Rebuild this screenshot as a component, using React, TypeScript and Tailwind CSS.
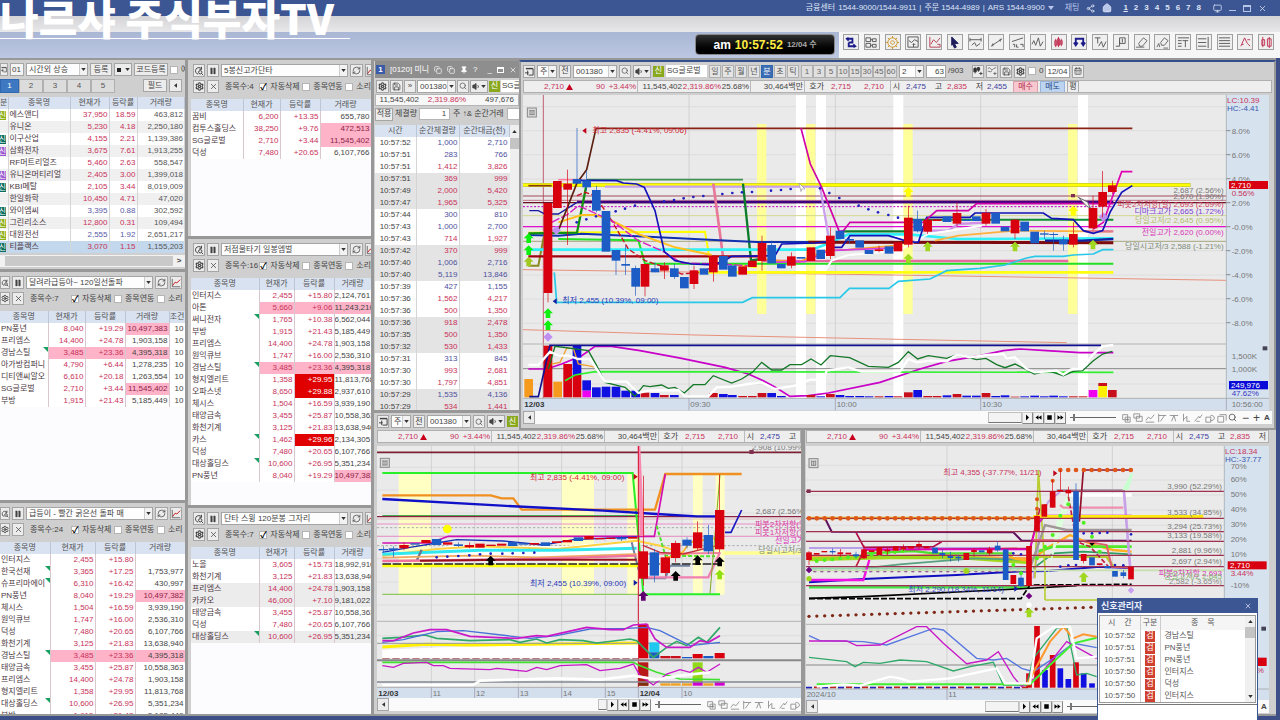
import type { ReactNode } from "react";
import {
  CalendarDays,
  Copy,
  House,
  Monitor,
  Pause,
  Pin,
  RefreshCw,
  Save,
  Search,
  Settings,
  Share2,
  Volume1,
  X,
} from "lucide-react";

const RED = "#d8000f";
const BLUE = "#1c5cc4";

/* ---------- small shared controls ---------- */

function Tri({ className = "" }: { className?: string }) {
  return (
    <svg viewBox="0 0 6 4" className={`h-[3px] w-[5px] ${className}`}>
      <path d="M0 0h6L3 4z" fill="#333" />
    </svg>
  );
}

function Btn({ children, label, className = "w-[12px]" }: { children: ReactNode; label?: string; className?: string }) {
  return (
    <button
      type="button"
      aria-label={label}
      className={`flex h-[13px] shrink-0 items-center justify-center overflow-hidden border border-[#a5a5a5] bg-[#ececec] whitespace-nowrap text-[#444] ${className}`}
    >
      {children}
    </button>
  );
}

function Combo({ value, label, className }: { value: string; label: string; className: string }) {
  return (
    <div className={`relative h-[13px] shrink-0 ${className}`}>
      <select
        aria-label={label}
        className="h-full w-full appearance-none overflow-hidden border border-[#a5a5a5] bg-[#fdfdfd] pr-[8px] pl-[2px] text-[#444]"
      >
        <option>{value}</option>
      </select>
      <span className="pointer-events-none absolute inset-y-px right-px flex w-[8px] items-center justify-center border-l border-[#ccc] bg-[#f2f2f2]">
        <Tri />
      </span>
    </div>
  );
}

function Check({ label, checked = false, className = "" }: { label: string; checked?: boolean; className?: string }) {
  return (
    <label className={`flex shrink-0 items-center gap-[3px] whitespace-nowrap ${className}`}>
      <input
        type="checkbox"
        defaultChecked={checked}
        className="size-[8px] appearance-none border border-[#b5b5b5] bg-white text-[9px] leading-[6px] font-bold text-black checked:after:content-['✓']"
      />
      {label}
    </label>
  );
}

const ScanIcon = () => (
  <svg viewBox="0 0 12 12" className="size-[10px]" fill="none" stroke="#444" strokeWidth="1.2">
    <path d="M9 3.5A4 4 0 1 0 5 9.8" />
    <circle cx="7.5" cy="7.5" r="2" />
    <path d="m9 9 2 2M9 1v3H6.500" />
  </svg>
);

const GridIcon = () => (
  <svg viewBox="0 0 10 10" className="size-[9px]" fill="none" stroke="#333" strokeWidth="1">
    <path d="M1 2h8v7H4M1 1.500h8M3 4v5M0 6.500h4" />
  </svg>
);

const MiniChart = () => (
  <svg viewBox="0 0 12 12" className="size-[10px]" fill="none">
    <path d="M1.500 1v9.500H11" stroke="#555" />
    <path d="m2 9 3-4 2 1 4-4" stroke="#c22" strokeWidth="1.200" />
  </svg>
);

const BarsPlus = () => (
  <svg viewBox="0 0 12 12" className="size-[10px]" fill="none" stroke="#333">
    <path d="M2.500 1v8M6.500 1v6" />
    <path d="M1 3h3v4H1zM5 2h3v3H5z" fill="#333" />
    <path d="M9.500 7v4M7.500 9h4" />
  </svg>
);

const WavePlus = () => (
  <svg viewBox="0 0 12 12" className="size-[10px]" fill="none" stroke="#666">
    <path d="M1 3l2-1 3 3 2-2 3-1M1 6l3 1 2-1M9.500 7v4M7.500 9h4" />
  </svg>
);

/* ---------- condition search panels ---------- */

// flags: t = new-entry mark, p = pink row, r = limit-up, v = pink volume, g = grey row
type ScanRow = [string, string, string, string, string?];

function Th({ children }: { children?: ReactNode }) {
  return (
    <th className="h-[12px] overflow-hidden border-r border-[#bcc6d4] bg-[#d9e2f0] p-0 text-center font-normal whitespace-nowrap text-[#555]">
      {children}
    </th>
  );
}

function ScanPanel({
  title,
  count,
  rows,
  cols,
  flush = false,
  extra = false,
  className,
}: {
  title: string;
  count: number;
  rows: ScanRow[];
  cols: number[];
  flush?: boolean;
  extra?: boolean;
  className: string;
}) {
  return (
    <section className={`flex flex-col overflow-hidden bg-[#cfcfcf] pt-[4px] ${className}`}>
      <div className={`flex shrink-0 gap-[2px] ${flush ? "" : "pl-[5px]"}`}>
        <Btn label="검색" className={flush ? "w-[10px]" : "w-[12px]"}><ScanIcon /></Btn>
        <Btn label="일시정지"><Pause size={8} fill="#444" strokeWidth={1} /></Btn>
        <Combo label="조건식" value={title} className="w-[127px]" />
        <Btn label="새로고침" className="w-[13px]"><RefreshCw size={9} /></Btn>
        <Btn label="차트"><MiniChart /></Btn>
      </div>
      <div className={`mt-[3px] flex h-[13px] shrink-0 items-center text-[#444] ${flush ? "" : "pl-[5px]"}`}>
        <Btn label="설정" className={flush ? "w-[10px]" : "w-[12px]"}><Settings size={9} strokeWidth={3} /></Btn>
        <Btn label="닫기" className="ml-[2px] w-[12px]"><X size={9} /></Btn>
        <span className="ml-[6px] w-[41px] whitespace-nowrap">종목수:{count}</span>
        <Check label="자동삭제" checked className="w-[43px]" />
        <Check label="종목연동" className="w-[43px]" />
        <Check label="소리" />
      </div>
      <div className={`mt-[6px] min-h-0 flex-1 overflow-hidden ${flush ? "" : "ml-[3px]"} bg-[#fcfcff]`}>
        <table className="w-full table-fixed border-collapse">
          <colgroup>
            {cols.map((w, i) => (
              <col key={i} style={{ width: w }} />
            ))}
          </colgroup>
          <thead>
            <tr>
              <Th>종목명</Th>
              <Th>현재가</Th>
              <Th>등락률</Th>
              <Th>거래량</Th>
              {extra && <Th>조건</Th>}
            </tr>
          </thead>
          <tbody>
            {rows.map(([name, price, rate, vol, f = ""], i) => {
              const pink = f.includes("p") ? "bg-[#ffb3c8]" : f.includes("g") ? "bg-[#ececec]" : "bg-white";
              const cell = "h-[12px] overflow-hidden border-r border-[#d8c8ce] p-0 pr-px text-right whitespace-nowrap";
              return (
                <tr key={i} className={f.includes("g") ? "bg-[#ececec]" : "bg-white"}>
                  <td className="relative h-[12px] overflow-hidden border-r border-[#d8c8ce] p-0 pl-px whitespace-nowrap text-[#4c3a44]">
                    {name}
                    {f.includes("t") && (
                      <span className="absolute top-0 right-0 border-t-[5px] border-l-[5px] border-t-[#18a060] border-l-transparent" />
                    )}
                  </td>
                  <td className={`${cell} ${pink} text-[#c8325a]`}>{price}</td>
                  <td className={`${cell} ${f.includes("r") ? "bg-[#e00000] text-white" : `${pink} text-[#c8325a]`}`}>{rate}</td>
                  <td className={`${cell} ${f.includes("v") ? "bg-[#ffb3c8] text-[#8c1f48]" : `${pink} text-[#444]`}`}>{vol}</td>
                  {extra && <td className={`${cell} text-[#444]`}>10</td>}
                </tr>
              );
            })}
          </tbody>
        </table>
      </div>
    </section>
  );
}

const surge: ScanRow[] = [
  ["PN풍년", "8,040", "+19.29", "10,497,383", "v"],
  ["프리엠스", "14,400", "+24.78", "1,903,158"],
  ["경남스틸", "3,485", "+23.36", "4,395,318", "tp"],
  ["아가방컴퍼니", "4,790", "+6.44", "1,278,235"],
  ["디티앤씨알오", "6,610", "+20.18", "1,263,554"],
  ["SG글로벌", "2,710", "+3.44", "11,545,402", "v"],
  ["부방", "1,915", "+21.43", "5,185,449"],
];

const redLine: ScanRow[] = [
  ["인터지스", "2,455", "+15.80", ""],
  ["한국선재", "3,365", "+17.25", "1,753,977", "t"],
  ["슈프리마에이", "6,310", "+16.42", "430,997", "t"],
  ["PN풍년", "8,040", "+19.29", "10,497,382", "v"],
  ["체시스", "1,504", "+16.59", "3,939,190"],
  ["원익큐브", "1,747", "+16.00", "2,536,310"],
  ["덕성", "7,480", "+20.65", "6,107,766"],
  ["화천기계", "3,125", "+21.83", "13,638,940"],
  ["경남스틸", "3,485", "+23.36", "4,395,318", "tp"],
  ["태양금속", "3,455", "+25.87", "10,558,363"],
  ["프리엠스", "14,400", "+24.78", "1,903,158"],
  ["형지엘리트", "1,358", "+29.95", "11,813,768"],
  ["대상홀딩스", "10,600", "+26.95", "5,351,234", "t"],
  ["부방", "1,915", "+21.43", "5,185,449"],
];

const fiveHigh: ScanRow[] = [
  ["꿈비", "6,200", "+13.35", "655,780"],
  ["컴투스홀딩스", "38,250", "+9.76", "472,513", "v"],
  ["SG글로벌", "2,710", "+3.44", "11,545,402", "v"],
  ["덕성", "7,480", "+20.65", "6,107,766"],
];

const lowPoint: ScanRow[] = [
  ["인터지스", "2,455", "+15.80", "2,124,761"],
  ["아톤", "5,660", "+9.06", "11,243,210", "p"],
  ["써니전자", "1,765", "+10.38", "6,562,044", "t"],
  ["부방", "1,915", "+21.43", "5,185,449"],
  ["프리엠스", "14,400", "+24.78", "1,903,158"],
  ["원익큐브", "1,747", "+16.00", "2,536,310"],
  ["경남스틸", "3,485", "+23.36", "4,395,318", "tp"],
  ["형지엘리트", "1,358", "+29.95", "11,813,768", "r"],
  ["오파스넷", "8,650", "+29.88", "2,937,610", "r"],
  ["체시스", "1,504", "+16.59", "3,939,190"],
  ["태양금속", "3,455", "+25.87", "10,558,363"],
  ["화천기계", "3,125", "+21.83", "13,638,940"],
  ["카스", "1,462", "+29.96", "2,134,305", "tr"],
  ["덕성", "7,480", "+20.65", "6,107,766"],
  ["대상홀딩스", "10,600", "+26.95", "5,351,234", "t"],
  ["PN풍년", "8,040", "+19.29", "10,497,383", "v"],
];

const swing: ScanRow[] = [
  ["노을", "3,605", "+15.73", "18,992,910"],
  ["화천기계", "3,125", "+21.83", "13,638,940"],
  ["프리엠스", "14,400", "+24.78", "1,903,158", "g"],
  ["카카오", "46,000", "+7.10", "9,181,022", "g"],
  ["태양금속", "3,455", "+25.87", "10,558,363"],
  ["덕성", "7,480", "+20.65", "6,107,766"],
  ["대상홀딩스", "10,600", "+26.95", "5,351,234", "tg"],
];

/* ---------- after-hours watch list ---------- */

const watch: [string, string, string, string, string][] = [
  ["#8fae1c", "에스앤디", "37,950", "18.59", "463,812"],
  ["", "유니온", "5,230", "4.18", "2,250,180"],
  ["#0c6b5c", "이구산업", "4,155", "2.21", "1,139,386"],
  ["#9c5ad0", "삼화전자", "3,675", "7.61", "1,913,255"],
  ["", "RF머트리얼즈", "5,460", "2.63", "558,547"],
  ["#9c5ad0", "유니온머티리얼", "2,405", "3.00", "1,399,018"],
  ["#0c6b5c", "KBI메탈", "2,105", "3.44", "8,019,009"],
  ["", "한일화학", "10,450", "4.71", "47,020"],
  ["#0c6b5c", "와이엠씨", "3,395", "0.88", "302,592"],
  ["#8fae1c", "그린리소스", "12,800", "0.31", "109,494"],
  ["#8fae1c", "대원전선", "2,555", "1.92", "2,651,217"],
  ["#0c6b5c", "티플랙스", "3,070", "1.15", "1,155,203"],
];

function WatchPanel() {
  return (
    <section className="flex h-[209px] shrink-0 flex-col overflow-hidden bg-[#cfcfcf] pt-[3px]">
      <div className="flex shrink-0 items-center gap-[2px]">
        <Btn label="창" className="w-[8px]"><GridIcon /></Btn>
        <input aria-label="그룹 번호" defaultValue="01" className="h-[13px] w-[14px] shrink-0 border border-[#a5a5a5] bg-[#f4f4f4] px-px" />
        <Combo label="그룹" value="시간외 상승" className="w-[62px]" />
        <Btn className="w-[22px]">등록</Btn>
        <Btn label="색" className="w-[18px]">
          <span className="mr-[4px] size-[4px] bg-[#222]" />
          <Tri />
        </Btn>
        <Btn className="w-[34px]">코드등록</Btn>
        <Check label="예" />
      </div>
      <div className="mt-[3px] mb-[4px] flex h-[14px] shrink-0 text-[#555]">
        {["1", "2", "3", "4", "5"].map((n, i) => (
          <button
            key={n}
            type="button"
            className={
              i === 0
                ? "w-[19px] border border-[#2d68b0] bg-[#3d78c0] text-white"
                : "w-[24px] border border-[#b0b0b0] bg-[#dcdcdc]"
            }
          >
            {n}
          </button>
        ))}
        <Btn className="ml-[28px] w-[24px]">필드</Btn>
        <Btn label="이전" className="ml-[2px] w-[13px]">
          <Tri className="rotate-90" />
        </Btn>
      </div>
      <table className="w-full table-fixed border-collapse bg-white">
        <colgroup>
          <col className="w-[8px]" />
          <col className="w-[62px]" />
          <col className="w-[39px]" />
          <col className="w-[28px]" />
          <col />
        </colgroup>
        <thead>
          <tr>
            <Th>분</Th>
            <Th>종목명</Th>
            <Th>현재가</Th>
            <Th>등락률</Th>
            <Th>거래량</Th>
          </tr>
        </thead>
        <tbody>
          {watch.map(([tag, name, price, rate, vol], i) => {
            const down = name === "와이엠씨" || name === "대원전선";
            const tone = down ? "text-[#5a5aa8]" : "text-[#c8325a]";
            const bg = i === 11 ? "bg-[#c3d8ec]" : i % 2 ? "bg-[#f0f0f0]" : "bg-white";
            const cell = "h-[12px] border-r border-[#d5d5d5] p-0 pr-px text-right";
            return (
              <tr key={name} className={`${bg} whitespace-nowrap`}>
                <td className="h-[12px] p-0">
                  {tag && (
                    <span className="flex h-[9px] w-[6px] items-center justify-end overflow-hidden leading-[9px] text-white" style={{ background: tag }}>
                      신
                    </span>
                  )}
                </td>
                <td className="h-[12px] overflow-hidden border-x border-[#d5d5d5] p-0 pl-px text-[#4c3a44]">{name}</td>
                <td className={`${cell} ${tone}`}>{price}</td>
                <td className={`${cell} ${tone}`}>{rate}</td>
                <td className={`${cell} text-[#555]`}>{vol}</td>
              </tr>
            );
          })}
        </tbody>
      </table>
      <div className="mt-[2px] flex h-[12px] items-center bg-[#f2f2f2]">
        <div className="ml-[5px] h-[10px] flex-1 bg-[#c9c9c9]" />
        <span className="w-[12px] text-center font-bold text-[#444]">&gt;</span>
      </div>
    </section>
  );
}

/* ---------- tick window ---------- */

const ticks: [string, string, string, boolean][] = [
  ["52", "1,000", "2,710", false],
  ["51", "283", "766", false],
  ["51", "1,412", "3,826", true],
  ["51", "369", "999", true],
  ["49", "2,000", "5,420", true],
  ["47", "1,965", "5,325", true],
  ["44", "300", "810", false],
  ["43", "1,000", "2,700", false],
  ["43", "714", "1,927", true],
  ["42", "370", "999", true],
  ["40", "1,006", "2,716", false],
  ["40", "5,119", "13,846", false],
  ["39", "427", "1,155", false],
  ["36", "1,562", "4,217", true],
  ["36", "500", "1,350", true],
  ["36", "918", "2,478", true],
  ["35", "500", "1,350", true],
  ["32", "530", "1,433", true],
  ["31", "313", "845", false],
  ["30", "993", "2,681", true],
  ["30", "1,797", "4,851", true],
  ["29", "1,535", "4,136", false],
  ["29", "534", "1,441", true],
];

function TickWindow() {
  return (
    <section className="flex h-[349px] flex-col overflow-hidden bg-[#cfcfcf] pl-px">
      <div className="flex h-[17px] shrink-0 items-center gap-[5px] bg-[#8e8e8e] px-px text-white">
        <span className="flex size-[9px] items-center justify-center bg-[#3a5ba8] leading-none font-bold">1</span>
        <span className="w-[39px] overflow-hidden whitespace-nowrap">[0120] 미니</span>
        <Copy size={8} />
        <Copy size={8} />
        <Pin size={8} fill="white" />
        <span>?</span>
        <span className="ml-[5px]">_</span>
        <span className="h-[6px] w-[7px] border border-t-2 border-white" />
        <X size={8} />
      </div>
      <div className="flex h-[16px] shrink-0 items-center gap-px pl-px">
        <Btn label="설정" className="w-[13px]"><Settings size={9} strokeWidth={3} /></Btn>
        <Btn label="잠금" className="w-[13px]"><Save size={9} /></Btn>
        <Btn label="더보기">»</Btn>
        <Combo label="종목코드" value="001380" className="w-[39px]" />
        <Btn label="찾기"><Search size={8} /></Btn>
        <Btn label="음성" className="w-[18px]">
          <Volume1 size={9} fill="#444" />
          <Tri />
        </Btn>
        <span className="flex size-[11px] shrink-0 items-center justify-center bg-[#8aa81e] text-white">신</span>
        <span className="overflow-hidden bg-white pl-px whitespace-nowrap">SG글로벌</span>
      </div>
      <div className="flex h-[12px] shrink-0 items-center border border-[#b5b5b5] bg-[#f7f7f7] text-right">
        <span className="w-[43px] text-[#444]">11,545,402</span>
        <span className="w-[47px] text-[#c8325a]">2,319.86%</span>
        <span className="flex-1 pr-[4px] text-[#444]">497,676</span>
      </div>
      <div className="my-px flex h-[14px] shrink-0 items-center overflow-hidden whitespace-nowrap">
        <Btn className="w-[18px]">적용</Btn>
        <label className="flex items-center pl-[2px]">
          체결량
          <input defaultValue="1" className="ml-[2px] h-[12px] w-[31px] border border-[#b5b5b5] bg-white pr-[3px] text-right" />
        </label>
        <span className="px-[3px]">주 ↑&amp; 순간거래</span>
        <input aria-label="순간거래" className="h-[12px] w-[20px] border border-[#b5b5b5] bg-white" />
      </div>
      <div className="mt-[3px] flex min-h-0 flex-1 overflow-hidden">
        <table className="flex-1 table-fixed border-collapse self-start bg-white">
          <colgroup>
            <col className="w-[41px]" />
            <col className="w-[43px]" />
            <col />
          </colgroup>
          <thead>
            <tr>
              <Th>시간</Th>
              <Th>순간체결량</Th>
              <Th>순간대금(천)</Th>
            </tr>
          </thead>
          <tbody>
            {ticks.map(([sec, qty, amt, up], i) => (
              <tr key={i} className={Math.floor(i / 3) % 2 ? "bg-[#e4e4e4]" : "bg-white"}>
                <td className="h-[12px] border-r border-[#d5d5d5] p-0 text-center text-[#444]">10:57:{sec}</td>
                <td className={`h-[12px] border-r border-[#d5d5d5] p-0 pr-px text-right ${up ? "text-[#c8325a]" : "text-[#5050a0]"}`}>{qty}</td>
                <td className={`h-[12px] p-0 pr-[2px] text-right ${up ? "text-[#c8325a]" : "text-[#5050a0]"}`}>{amt}</td>
              </tr>
            ))}
          </tbody>
        </table>
        <div className="flex w-[9px] flex-col items-center bg-[#efefef]">
          <Tri className="my-[5px] rotate-180" />
          <div className="h-[11px] w-full bg-[#c4c4c4]" />
        </div>
      </div>
    </section>
  );
}

/* ---------- chart window chrome ---------- */

function CodeBar() {
  return (
    <>
      <Btn label="창"><GridIcon /></Btn>
      <Combo label="시장" value="주" className="w-[20px]" />
      <Btn>전</Btn>
      <Combo label="종목코드" value="001380" className="w-[44px]" />
      <Btn label="찾기"><Search size={8} /></Btn>
      <Btn label="음성" className="w-[18px]">
        <Volume1 size={9} fill="#444" />
        <Tri />
      </Btn>
      <span className="flex size-[11px] shrink-0 items-center justify-center bg-[#8aa81e] text-white">신</span>
    </>
  );
}

function Quote({ className, children }: { className: string; children: ReactNode }) {
  return <span className={`shrink-0 text-right ${className}`}>{children}</span>;
}

function QuoteBar({ children }: { children?: ReactNode }) {
  return (
    <div className="flex h-[13px] shrink-0 items-center overflow-hidden border border-[#b0b0b0] bg-[#eeeeee] whitespace-nowrap text-[#444]">
      <Quote className="w-[40px] text-[#c8325a]">2,710</Quote>
      <svg viewBox="0 0 8 7" className="mx-[2px] h-[6px] w-[7px] shrink-0"><path d="M4 0l4 7H0z" fill="#c8001e" /></svg>
      <Quote className="w-[30px] text-[#c8325a]">90</Quote>
      <Quote className="w-[33px] border-r border-[#bbb] pr-px text-[#c8325a]">+3.44%</Quote>
      <Quote className="w-[44px]">11,545,402</Quote>
      <Quote className="w-[39px] text-[#c8325a]">2,319.86%</Quote>
      <Quote className="w-[30px] border-r border-[#bbb] pr-px">25.68%</Quote>
      <Quote className="w-[54px] border-r border-[#bbb] pr-px">30,464백만</Quote>
      <Quote className="w-[19px]">호가</Quote>
      <Quote className="w-[27px] text-[#c8325a]">2,715</Quote>
      <Quote className="w-[33px] text-[#c8325a]">2,710</Quote>
      <Quote className="ml-[6px] w-[10px] border-l border-[#bbb]">시</Quote>
      <Quote className="w-[26px] text-[#4040a0]">2,475</Quote>
      <Quote className="w-[16px]">고</Quote>
      <Quote className="w-[25px] text-[#c8325a]">2,835</Quote>
      <Quote className="w-[16px]">저</Quote>
      <Quote className="w-[26px] pr-[2px] text-[#4040a0]">2,455</Quote>
      {children}
    </div>
  );
}

const toolGlyphs = [
  "M2 2h6v6H2zM5 5h6v6H5zM8 6v4M6 8h4",
  "M1 1h7v5H1zM4 4h7v6H4z",
  "M1 9l3-4 3 2 4-5M1 11h10",
  "M2 1v10M2 3h9M4 10l5-7",
  "M1 3h10M3 10l3-7 2 7",
  "M3 1v9M3 8l4-4v6h4",
  "M2 10l5-6 1 2 3-4M4 10h4",
  "M1 5h6v6H1zM6 8a3 3 0 1 0 0-4",
  "M1 4h7v7H1zM3 2h8v7",
];

const transport: [string, string][] = [
  ["재생", "M4 2l4 4-4 4z"],
  ["뒤로", "M6 3L2 6l4 3zM10 3L6 6l4 3z"],
  ["정지", "M3 3h6v6H3z"],
  ["앞으로", "M2 3l4 3-4 3zM6 3l4 3-4 3z"],
];

function ScrollRow({ controls }: { controls: number }) {
  return (
    <div className="flex h-[13px] shrink-0 items-center overflow-hidden bg-[#fafafa] text-[#444]">
      <Btn label="왼쪽"><Tri className="rotate-90" /></Btn>
      <div className="flex-1" />
      <div className={`h-[11px] shrink-0 border border-[#c0c0c0] border-b-[#777] bg-[#f3f3f3] ${controls > 8 ? "w-[34px]" : "w-[9px]"}`} />
      {transport.map(([name, d]) => (
        <button key={name} type="button" aria-label={name} className="flex h-[12px] w-[11px] shrink-0 items-center justify-center border border-[#ccc] border-r-[#888] border-b-[#888] bg-[#f3f3f3]">
          <svg viewBox="0 0 12 12" className="size-[9px]"><path d={d} fill="#000" /></svg>
        </button>
      ))}
      <input
        type="range"
        aria-label="확대"
        defaultValue={6}
        className="mx-[4px] h-px w-[46px] shrink-0 appearance-none bg-[#666] [&::-webkit-slider-thumb]:h-[7px] [&::-webkit-slider-thumb]:w-[2px] [&::-webkit-slider-thumb]:appearance-none [&::-webkit-slider-thumb]:bg-[#777]"
      />
      {toolGlyphs.slice(0, controls).map((d, i) => (
        <button key={i} type="button" aria-label={`도구 ${i + 1}`} className="flex w-[12px] shrink-0 justify-center">
          <svg viewBox="0 0 12 12" className="size-[10px]" fill="none" stroke="#888"><path d={d} /></svg>
        </button>
      ))}
      {controls > 8 && (
        <>
          <button type="button" aria-label="찾기" className="w-[12px]"><Search size={9} /></button>
          <button type="button" className="w-[11px] text-[12px]">−</button>
          <button type="button" className="w-[11px] text-[12px]">+</button>
          <button type="button" className="w-[10px] font-bold">A</button>
        </>
      )}
    </div>
  );
}

/* ---------- chart drawing; charts use three units per pixel ---------- */

function L({ d, c, w = 4, dash }: { d: string; c: string; w?: number; dash?: string }) {
  return <polyline points={d} fill="none" stroke={c} strokeWidth={w} strokeDasharray={dash} />;
}

function T({ x, y, c = "#777", end = false, bold = false, children }: { x: number; y: number; c?: string; end?: boolean; bold?: boolean; children: string }) {
  return (
    <text x={x} y={y} fill={c} textAnchor={end ? "end" : "start"} fontWeight={bold ? 700 : 400} fontSize={24}>
      {children}
    </text>
  );
}

function Dots({ at, c, r = 4 }: { at: number[][]; c: string; r?: number }) {
  return (
    <>
      {at.map(([x, y], i) => (
        <circle key={i} cx={x} cy={y} r={r} fill={c} />
      ))}
    </>
  );
}

// centre, top, bottom, colour, optional wick top and bottom
type Bar = [number, number, number, string, number?, number?];

function Bars({ data, w = 26 }: { data: Bar[]; w?: number }) {
  return (
    <>
      {data.map(([x, t, b, c, wt, wb], i) => (
        <g key={i} fill={c}>
          {wt !== undefined && <rect x={x - 1} y={wt} width={2} height={(wb ?? b) - wt} />}
          <rect x={x - w / 2} y={t} width={w} height={b - t} />
        </g>
      ))}
    </>
  );
}

function Arrow({ x, y, c }: { x: number; y: number; c: string }) {
  return <path d={`M${x} ${y - 14}l15 15h-8v14h-14v-14h-8z`} fill={c} />;
}

function Corner({ x, y }: { x: number; y: number }) {
  return (
    <g fill="none" stroke="#888" strokeWidth="3">
      <rect x={x} y={y} width="27" height="27" fill="#ddd" />
      <path d={`M${x + 6} ${y + 8}h15M${x + 6} ${y + 20}h15M${x + 8} ${y + 6}v15M${x + 14} ${y + 8}v12M${x + 20} ${y + 6}v15`} />
    </g>
  );
}

const mainCandles: Bar[] = [
  [99, 432, 702, RED, 432, 730],
  [127, 366, 447, RED],
  [158, 374, 392, RED, 332, 558],
  [186, 360, 374, BLUE, 207, 374],
  [215, 364, 385, BLUE, 335, 395],
  [244, 393, 455, BLUE, 380, 460],
  [273, 456, 578, BLUE],
  [303, 573, 605, BLUE, 573, 648],
  [332, 615, 620, BLUE, 560, 648],
  [362, 627, 683, BLUE, 620, 710],
  [390, 615, 683, RED, 615, 712],
  [420, 628, 640, BLUE, 610, 640],
  [448, 619, 635, RED, 610, 660],
  [478, 628, 654, BLUE, 615, 660],
  [508, 654, 688, BLUE],
  [537, 634, 675, RED, 620, 690],
  [567, 628, 647, BLUE],
  [595, 590, 640, RED, 590, 668],
  [625, 591, 632, BLUE],
  [652, 619, 653, BLUE],
  [683, 622, 647, RED],
  [712, 605, 624, RED],
  [741, 552, 606, RED, 530, 635],
  [770, 558, 613, BLUE, 545, 613],
  [799, 615, 628, BLUE],
  [829, 592, 620, RED, 580, 628],
  [858, 594, 599, BLUE],
  [888, 565, 606, RED],
  [917, 572, 600, BLUE],
  [946, 530, 591, RED, 505, 600],
  [975, 515, 540, BLUE],
  [1004, 540, 545, BLUE, 530, 555],
  [1034, 544, 566, BLUE],
  [1062, 573, 585, BLUE],
  [1092, 571, 576, RED, 560, 580],
  [1122, 562, 584, BLUE],
  [1149, 550, 577, RED],
  [1180, 476, 557, RED, 440, 565],
  [1208, 480, 517, BLUE, 455, 520],
  [1238, 482, 518, RED, 475, 525],
  [1266, 481, 486, RED],
  [1296, 472, 489, BLUE],
  [1326, 462, 494, RED, 430, 500],
  [1355, 482, 486, BLUE],
  [1384, 472, 486, BLUE],
  [1413, 461, 494, RED, 450, 500],
  [1442, 462, 494, BLUE],
  [1470, 503, 517, BLUE],
  [1500, 482, 523, RED, 480, 540],
  [1529, 488, 517, BLUE],
  [1559, 518, 553, BLUE],
  [1588, 523, 527, BLUE, 515, 540],
  [1616, 525, 528, BLUE, 520, 575],
  [1645, 542, 556, BLUE, 530, 575],
  [1675, 525, 557, RED, 490, 565],
  [1734, 447, 508, RED, 410, 515],
  [1763, 399, 443, RED, 336, 475],
  [1792, 379, 399, RED, 365, 405],
];

const VR = "#c8101c";
const VB = "#1010e0";
const mainVolume: Bar[] = [
  [41, 960, 1015, "#f59a1c"],
  [99, 860, 1015, RED],
  [128, 968, 1015, "#f59a1c"],
  [158, 915, 1015, RED],
  [186, 860, 948, VB],
  [186, 948, 1015, RED],
  [215, 964, 995, VB],
  [215, 995, 1015, "#f000f0"],
  [244, 985, 1015, VB],
  [273, 983, 1015, VB],
  [303, 983, 1015, VB],
  [332, 995, 1015, VB],
  [362, 995, 1015, VB],
  [390, 1001, 1015, VR],
  [420, 1002, 1015, VB],
  [448, 1008, 1015, VR],
  [478, 1008, 1015, VB],
  [595, 1002, 1015, VR],
  [625, 1005, 1015, VB],
  [652, 1008, 1015, VB],
  [683, 1011, 1015, VR],
  [712, 1011, 1015, VR],
  [741, 1002, 1015, VR],
  [770, 1002, 1015, VB],
  [799, 1011, 1015, VB],
  [888, 1008, 1015, VR],
  [917, 1012, 1015, VB],
  [946, 1005, 1015, VR],
  [975, 1008, 1015, VB],
  [1004, 1011, 1015, VB],
  [1034, 1011, 1015, VB],
  [1062, 1012, 1015, VB],
  [1092, 1012, 1015, VR],
  [1122, 1011, 1015, VB],
  [1149, 1012, 1015, VR],
  [1180, 1000, 1015, VR],
  [1208, 993, 1015, VB],
  [1238, 1011, 1015, VR],
  [1266, 1011, 1015, VR],
  [1296, 1009, 1015, VB],
  [1326, 1005, 1015, VR],
  [1355, 1010, 1015, VB],
  [1384, 1010, 1015, VB],
  [1413, 1002, 1015, VR],
  [1442, 1011, 1015, VB],
  [1470, 1009, 1015, VB],
  [1500, 1013, 1015, VR],
  [1529, 1012, 1015, VB],
  [1559, 1010, 1015, VB],
  [1588, 1012, 1015, VB],
  [1616, 1010, 1015, VB],
  [1645, 1012, 1015, VB],
  [1675, 1012, 1015, VR],
  [1704, 1012, 1015, VR],
  [1734, 993, 1015, "#f000f0"],
  [1763, 972, 981, VR],
  [1763, 981, 1015, "#fff000"],
  [1792, 993, 1015, VR],
];

const ema = [
  [185, 490], [214, 481], [243, 472], [302, 457], [330, 449], [360, 440], [447, 427], [477, 423], [506, 418],
  [535, 414], [565, 411], [622, 405], [652, 402], [681, 400], [711, 399], [768, 395], [798, 393], [827, 390],
  [915, 388], [943, 402], [973, 417], [1031, 440], [1060, 451], [1089, 460], [1120, 468], [1149, 476],
];

function MainChart() {
  const pct = ["8.0%", "6.0%", "4.0%", "2.0%", "-0.0%", "-2.0%", "-4.0%", "-6.0%", "-8.0%"];
  return (
    <svg viewBox="24 108 2247 948" className="block w-full" role="img" aria-label="분봉 차트">
      <rect x="24" y="108" width="2110" height="912" fill="#eaeaea" />
      {[143, 215, 287, 360, 432, 504, 575, 648, 720, 793, 892, 975].map((y) => (
        <L key={y} d={`24,${y} 2134,${y}`} c="#d6d6d6" w={2} />
      ))}
      {[522, 961, 1397].map((x) => (
        <L key={x} d={`${x},108 ${x},1018`} c="#d2d2d2" w={3} />
      ))}
      {[843, 903, 1135, 1689].map((x) => (
        <rect key={x} x={x} y="108" width="30" height="910" fill="#fff" />
      ))}
      {[726, 873, 1165, 1659].map((x) => (
        <rect key={x} x={x} y="195" width="28" height="570" fill="#ffff99" />
      ))}
      <L d="85,108 85,1018" c="#c06070" w={3} />
      <L d="24,855 2134,855" c="#b4b4b4" w={3} />
      <L d="24,929 2134,929" c="#888" w={3} />

      <L d="24,378 2027,378" c="#c8c832" w={12} />
      <L d="24,378 2025,378" c="#ffff00" w={8} />
      <L d="40,380 110,380" c="#8a3a10" w={5} />
      <L d="24,411 2134,411" c="#a04a5c" w={3} />
      <L d="24,424 2134,424" c="#c07888" w={3} />
      <L d="24,431 2134,431" c="#6a1020" w={4} />
      <L d="186,429 1795,429" c="#3c0080" w={7} />
      <L d="24,443 1795,443" c="#c000c0" w={3} dash="6 5" />
      <L d="24,470 2134,470" c="#d2d88c" w={3} />
      <L d="24,503 2134,503" c="#e010d0" w={4} />
      <L d="24,547 2134,547" c="#a8a880" w={3} />
      <L d="24,632 1200,649 2134,664" c="#e8907c" w={3} />
      <L d="24,812 540,828 1200,842 1655,851" c="#e8907c" w={3} />
      <L d="270,383 915,383 940,530" c="#c8a0ec" w={7} />
      <L d="130,362 200,362" c="#ff80a0" w={5} />
      <L d="215,362 684,362" c="#3c9050" w={5} />
      <L d="684,374 708,604 741,600" c="#0c7c2c" w={7} />
      <L d="595,374 625,600" c="#e87898" w={8} />
      <L d="40,521 570,518 585,608 725,625" c="#ffff00" w={6} />
      <L d="40,528 130,530 200,524 400,533 660,546 725,549 900,549" c="#1030b0" w={6} />
      <L d="130,540 370,544 390,614 1795,614" c="#22e022" w={6} />
      <L d="40,523 186,521 213,385" c="#109010" w={7} />
      <L d="40,620 70,620 85,540 100,500" c="#8a8a20" w={6} />
      <L d="40,572 130,572 890,572 950,550 1000,526 1180,526 1330,540 1795,538" c="#30f0f8" w={8} />
      <L d="40,592 740,592" c="#a00010" w={7} />
      <L d="740,606 1660,606" c="#e868a0" w={7} />
      <L d="540,640 1795,640" c="#ffff10" w={8} />
      <L d="880,550 1795,551" c="#7c0c10" w={9} />
      <L d="1590,545 1700,545 1795,540" c="#1020a0" w={7} />
      <L d="985,517 1180,517" c="#0c7c2c" w={7} />
      <L d="1190,482 1795,482" c="#0c9030" w={6} />
      <L d="1260,545 1330,530 1500,515 1790,518" c="#ffb040" w={5} />
      <L d="1230,515 1300,515 1330,495 1420,490" c="#d090e8" w={7} />
      <L d="1710,517 1795,517" c="#e07890" w={7} />
      <L d="930,635 950,605 1000,588 1100,580 1160,570 1240,525 1400,500" c="#fff" w={6} />
      <L d="740,600 850,610 930,575 1000,572 1160,558" c="#ffa020" w={5} />
      <L d="760,610 870,608 940,575 1160,566" c="#d040e0" w={5} />
      <L d="130,490 200,468 240,468 280,480 370,525 480,565 590,588" c="#ffc020" w={6} />
      <L d="186,410 210,400 240,410 290,485 340,570 390,605 430,618 500,645 560,640 620,610" c="#c81020" w={4} dash="16 7" />
      <L d="110,490 160,465 190,440 290,485 370,545 440,575 500,612 620,615 720,622" c="#d818c0" w={4} dash="26 6" />
      <L d="43,455 70,455 90,465 130,465 186,430" c="#1818a0" w={4} />
      <L d="186,364 305,365 325,372 365,375 388,385 420,455 448,578 480,605 530,615 580,617 620,610 650,592 780,590 800,555 900,552 935,548 950,565 980,565 1005,530 1120,530 1180,548 1210,550 1235,475 1365,475 1380,462 1585,462 1610,478 1675,482 1705,515 1735,523 1763,515 1785,460 1820,400 1852,380" c="#1212b8" w={5} />
      <L d="118,640 125,730 683,730 712,716 975,716 1003,688 1122,688 1150,667 1245,660 1295,635 1395,628 1470,618 1535,597 1560,592 1645,592 1675,588 1735,585 1763,572 1795,572" c="#28c8e8" w={5} />
      <L d="130,515 186,372 215,332 243,208" c="#5c2010" w={5} />
      <L d="243,208 1852,208" c="#8c2014" w={5} />
      <L d="858,208 886,315 920,385 973,518 985,515 1005,490 1225,490 1265,455 1360,455 1385,434 1795,434" c="#d000a8" w={5} />
      <L d="1735,510 1765,490 1790,420 1820,338 1852,338" c="#e000b0" w={5} />
      <path d="M124 500l14 14-14 14-14-14z" fill="#c090f0" />
      <path d="M1765 460l14 14-14 14-14-14z" fill="#c090f0" />
      <Dots at={ema} c="#2020c0" />
      <Bars data={mainCandles} />
      <Arrow x={41} y={537} c="#10f010" />
      <Arrow x={41} y={573} c="#10f010" />
      <Arrow x={41} y={607} c="#a0c820" />
      <Arrow x={99} y={762} c="#10f010" />
      <Arrow x={99} y={798} c="#10f010" />
      <path d="M99 820l14 14-14 14-14-14z" fill="#c090f0" />
      <Arrow x={1180} y={398} c="#ffff00" />
      <Arrow x={1675} y={455} c="#ffff00" />
      <Arrow x={1180} y={598} c="#a0d820" />
      <Arrow x={1238} y={562} c="#a0d820" />
      <Arrow x={1500} y={562} c="#a0d820" />
      <Arrow x={1734} y={556} c="#a0d820" />
      <rect x="1668" y="405" width="12" height="10" fill="#803050" />
      <path d="M1690 415l28 14 8 18-12-6z" fill="#eee" stroke="#666" strokeWidth="3" />
      <path d="M852 372l18 18-10 0-2 8z" fill="#fff" stroke="#999" strokeWidth="2" />

      <path d="M202 215l12-9v18z" fill="#c00018" />
      <T x={232} y={223} c="#d02838">최고 2,835 (-4.41%, 09:06)</T>
      <path d="M113 727l12-9v18z" fill="#1020a0" />
      <T x={142} y={733} c="#2838b8">최저 2,455 (10.39%, 09:00)</T>
      <T x={2126} y={401} end>2,687 (2.56%)</T>
      <T x={2126} y={421} end>2,670 (1.90%)</T>
      <T x={2126} y={443} c="#d04060" end>피봇2차저항(일) 2,693 (2.69%)</T>
      <T x={2126} y={465} c="#8040d0" end>디마크고가 2,665 (1.72%)</T>
      <T x={2126} y={493} c="#b4bc6c" end>당일고저/2 2,645 (0.95%)</T>
      <T x={2126} y={529} c="#d838b8" end>전일고가 2,620 (0.00%)</T>
      <T x={2126} y={569} c="#7c8c78" end>당일시고저/3 2,588 (-1.21%)</T>
      <Corner x={37} y={147} />

      <L d="40,930 95,930 140,915 200,890 240,862 290,862 375,875 500,898 630,925 700,945 745,965 785,987 825,1012 880,1010 940,1002 1095,970 1215,930 1295,907 1395,890 1465,875 1515,870 1595,875 1695,881 1795,881" c="#c800c8" w={5} />
      <Bars data={mainVolume} />
      <L d="43,1013 70,1013 105,859 1758,859" c="#101090" w={5} />
      <L d="150,965 180,948 240,938 1795,940" c="#30f030" w={5} />
      <L d="110,915 135,910 155,868 175,868 190,915 245,925" c="#f0a030" w={4} />
      <L d="100,930 120,862 220,875 245,920 270,970 330,985 360,1012 385,980 405,983 440,978 460,988 480,985 508,1002 535,977 570,977 595,950 650,972 680,960 712,940 740,910 770,933 800,933 825,917 860,917 888,900 918,918 946,890 1004,896 1060,922 1120,925 1150,910 1180,878 1208,900 1240,890 1295,898 1325,887 1385,902 1413,898 1445,917 1470,926 1500,915 1530,930 1558,945 1590,937 1615,940 1645,950 1675,937 1703,935 1735,905 1763,885 1792,877" c="#147828" w={4} />
      <L d="40,918 70,918 105,878 130,890 160,890 190,900 225,900 245,930 270,968 335,968 370,1002 400,995 490,993 510,1012 580,1012 605,985 650,983 700,975 740,970 780,990 840,980 885,962 925,962 935,935 1000,925 1040,938 1155,938 1180,900 1205,910 1245,905 1295,907 1325,887 1365,895 1415,888 1465,885 1475,898 1500,895 1535,930 1560,940 1625,935 1645,947 1670,930 1700,930 1735,885 1763,862 1795,858" c="#fff" w={7} />

      <rect x="2134" y="108" width="128" height="912" fill="#d6e2ee" />
      <L d="2134,108 2134,1052" c="#b0b8c0" w={3} />
      <T x={2136} y={131} c="#c8325a">LC:10.39</T>
      <T x={2136} y={156} c="#3858b0">HC:-4.41</T>
      {pct.map((p, i) => (
        <g key={p}>
          <L d={`2134,${215 + i * 72} 2146,${215 + i * 72}`} c="#888" w={3} />
          <T x={2150} y={224 + i * 72}>{p}</T>
        </g>
      ))}
      <rect x="2142" y="366" width="117" height="24" fill="#d80010" />
      <T x={2148} y={387} c="#fff">2,710</T>
      <T x={2150} y={411} c="#c8325a">0.56%</T>
      <T x={2150} y={899}>1,500K</T>
      <T x={2150} y={940}>1,000K</T>
      <rect x="2142" y="966" width="117" height="25" fill="#0808d8" />
      <T x={2148} y={987} c="#fff">249,976</T>
      <T x={2150} y={1011} c="#3838c0">47.62%</T>
      <rect x="2243" y="862" width="14" height="12" fill="#445" />

      <rect x="24" y="1018" width="2238" height="36" fill="#d3dfec" />
      <L d="24,1018 2262,1018" c="#999" w={2} />
      {[522, 961, 1397, 2134].map((x) => (
        <L key={x} d={`${x},1018 ${x},1054`} c="#aab" w={3} />
      ))}
      <T x={28} y={1043} c="#333" bold>12/03</T>
      <T x={526} y={1043}>09:30</T>
      <T x={965} y={1043}>10:00</T>
      <T x={1401} y={1043}>10:30</T>
      <T x={2150} y={1043}>10:56:00</T>
    </svg>
  );
}

const leftCandles: Bar[] = [
  [40, 420, 424, BLUE, 412, 430],
  [70, 418, 423, BLUE, 412, 445],
  [102, 408, 418, RED, 400, 424],
  [135, 403, 407, BLUE],
  [168, 393, 402, RED],
  [200, 390, 408, BLUE],
  [233, 400, 407, RED],
  [265, 406, 411, BLUE, 400, 414],
  [298, 408, 415, RED, 400, 418],
  [330, 404, 416, RED],
  [363, 407, 411, RED],
  [395, 404, 410, RED],
  [428, 399, 411, BLUE],
  [460, 403, 407, BLUE],
  [493, 402, 407, RED],
  [526, 400, 411, BLUE],
  [560, 397, 402, RED],
  [592, 393, 400, RED],
  [625, 385, 396, BLUE],
  [657, 381, 391, RED],
  [690, 387, 391, RED],
  [722, 386, 390, RED],
  [755, 386, 391, BLUE, 381, 396],
  [788, 384, 389, RED],
  [820, 427, 509, RED, 200, 530],
  [853, 430, 500, BLUE, 420, 520],
  [886, 445, 492, RED, 440, 500],
  [917, 402, 447, RED, 395, 460],
  [951, 392, 410, BLUE, 385, 418],
  [983, 370, 418, RED, 337, 425],
  [1015, 378, 427, BLUE, 348, 435],
  [1049, 303, 421, RED, 197, 430],
];

const leftBars: Bar[] = [
  [820, 645, 748, RED],
  [853, 700, 730, "#20c8f0"],
  [853, 730, 748, BLUE],
  [886, 741, 748, VR],
  [917, 741, 748, VR],
  [951, 744, 748, BLUE],
  [983, 735, 748, RED],
  [1015, 741, 748, BLUE],
  [1049, 732, 748, RED],
  [820, 760, 830, "#b81818"],
  [820, 822, 830, "#803010"],
  [886, 823, 830, "#f0a020"],
  [917, 823, 830, "#f0a020"],
  [951, 823, 830, "#f0a020"],
  [983, 760, 820, "#90d818"],
  [983, 819, 830, "#d000d0"],
  [1015, 823, 830, "#f0a020"],
  [1049, 818, 830, "#d000d0"],
];

function TenMinuteChart() {
  return (
    <svg viewBox="21 111 1272 756" className="block w-full" role="img" aria-label="10분봉 차트">
      <rect x="21" y="111" width="1272" height="724" fill="#eaeaea" />
      {[175, 243, 312, 381, 449, 519, 588, 680].map((y) => (
        <L key={y} d={`21,${y} 1293,${y}`} c="#d6d6d6" w={2} />
      ))}
      {[184, 314, 445, 575, 706, 936].map((x) => (
        <L key={x} d={`${x},111 ${x},835`} c="#d2d2d2" w={3} />
      ))}
      {[[86, 97], [575, 97], [772, 33], [969, 29], [1037, 27]].map(([x, w]) => (
        <rect key={x} x={x} y="195" width={w} height="362" fill="#ffffc4" />
      ))}
      <L d="21,130 1293,130" c="#7c2034" w={5} />
      <rect x="1138" y="123" width="13" height="12" fill="#803050" />
      <L d="21,356 1293,356" c="#aaa" w={3} dash="7 6" />
      <L d="21,410 1293,410" c="#aaa" w={3} dash="7 6" />
      <L d="37,321 805,321" c="#0c9020" w={5} />
      <L d="21,323 1293,323" c="#902040" w={4} />
      <L d="21,330 1293,330" c="#d8a0b0" w={2} />
      <L d="21,345 1293,345" c="#e890c8" w={3} />
      <L d="21,382 1293,382" c="#e890c8" w={3} />
      <L d="1060,432 1293,432" c="#ffff90" w={10} />
      <L d="37,192 788,192 805,380 820,556 1050,556" c="#28f028" w={6} />
      <L d="37,556 820,556" c="#90c860" w={4} />
      <L d="37,259 362,259 395,268 430,268 455,302 855,302 886,195 1115,195" c="#f09020" w={7} />
      <L d="37,270 395,290 700,305 860,315 980,322 1040,322" c="#1010c8" w={7} />
      <L d="37,402 180,402 235,382 805,382 853,382 886,195" c="#d010b0" w={5} />
      <L d="37,430 120,415 200,402 260,392 400,396 520,408 610,392 700,388 800,384" c="#1830b8" w={4} />
      <path d="M37 445L250 408 575 412 805 392V432L575 440 200 452z" fill="#fff" />
      <L d="37,440 200,420 330,412 560,420 800,395 870,410 960,440" c="#ffd040" w={6} />
      <L d="37,436 180,430 330,424 560,424 800,418" c="#30e8f0" w={9} />
      <L d="140,455 155,422" c="#707888" w={7} />
      <L d="785,400 805,480 820,508 886,508 900,470 960,470" c="#7080a0" w={6} />
      <L d="37,446 300,440 500,445 800,435" c="#f0a860" w={5} />
      <L d="37,456 300,453 500,450 800,440" c="#f070a0" w={7} />
      <L d="150,455 400,452 800,452" c="#981020" w={6} />
      <L d="37,470 805,470" c="#ffff10" w={9} />
      <L d="805,435 1050,432" c="#f080a0" w={6} />
      <L d="860,350 886,440 1035,442" c="#50e030" w={6} dash="12 6" />
      <L d="886,445 930,440 960,400 1050,385" c="#ffb020" w={5} />
      <L d="820,410 870,430 940,435 1040,410" c="#c03040" w={4} />
      <L d="830,505 1015,505 1050,430" c="#f080b0" w={7} />
      <L d="37,465 1050,465" c="#222" w={4} dash="26 5" />
      <L d="1065,370 1083,370 1115,303" c="#1818c0" w={5} />
      <L d="1020,553 1050,197" c="#80a820" w={3} />
      <path d="M803 111h8l12 270h-14z" fill="#f888b0" />
      <L d="805,111 805,835" c="#d01030" w={3} />
      <circle cx="232" cy="360" r="13" fill="#ff0" />
      <Dots at={[[200, 445], [232, 443], [265, 441], [298, 439], [330, 436], [362, 434], [397, 434], [428, 433], [460, 432], [493, 431]]} c="#2020c0" />
      <Bars data={leftCandles} w={28} />
      <Arrow x={362} y={454} c="#000" />
      <Arrow x={917} y={500} c="#000" />
      <Arrow x={983} y={453} c="#000" />
      <Arrow x={1049} y={457} c="#000" />
      <Arrow x={820} y={560} c="#600070" />
      <Arrow x={1049} y={496} c="#90e010" />
      <T x={480} y={212} c="#d02838">최고 2,835 (-4.41%, 09:00)</T>
      <path d="M803 203l-12-9v18z" fill="#c00018" />
      <T x={480} y={530} c="#2838b8">최저 2,455 (10.39%, 09:00)</T>
      <path d="M803 521l-12-9v18z" fill="#1020a0" />
      <T x={1145} y={124}>2,908 (10.99%)</T>
      <T x={1157} y={315}>2,687 (2.56%)</T>
      <T x={1155} y={355} c="#d838a0">피봇2차저항(일)</T>
      <T x={1155} y={379} c="#d838a0">피봇1차저항(일)</T>
      <T x={1215} y={403} c="#d838b8">전일고가</T>
      <T x={1165} y={431} c="#7c8c78">당일시고저/3</T>
      <Corner x={31} y={148} />

      <L d="21,637 1293,637" c="#b4b4b4" w={3} />
      <path d="M37 722L240 714 805 702V748H37z" fill="#fff" />
      <L d="37,714 170,706 300,708 805,702" c="#fff000" w={9} />
      <L d="21,703 1293,703" c="#999" w={3} />
      <Bars data={leftBars} w={30} />
      <L d="37,749 805,749" c="#b06070" w={3} dash="22 8" />
      <L d="37,688 90,685 165,678 200,688 300,695 420,692 450,700 500,690 530,702 570,692 640,695 680,702 780,690 800,695 820,715 850,745 890,715 920,697 950,710 985,685 1010,700 1050,655" c="#30a868" w={5} />
      <L d="37,700 100,692 200,668 280,665 480,688 560,680 660,660 770,658 830,655 870,665 960,710 1050,700" c="#4870d8" w={4} />
      <L d="37,695 70,695 130,672 180,662 230,662 300,682 440,688 500,680 530,682 650,655 720,662 760,662 790,648 830,645 855,690 890,715 960,715 990,695 1015,700 1050,680" c="#c818c8" w={5} />
      <L d="21,754 1293,754" c="#888" w={6} />
      <L d="21,819 1293,819" c="#808890" w={4} />
      <L d="37,760 790,760 805,768 860,790 930,810 1050,812" c="#40e030" w={5} />
      <L d="37,770 70,775 100,763 170,760 190,770 220,770 240,778 360,782 380,778 470,787 500,775 530,782 570,770 650,767 690,785 750,778 790,765 810,800 850,828 890,795 930,782 960,790 985,775 1010,790 1050,765" c="#c818c8" w={4} />
      <L d="37,828 310,828 330,815 560,808 690,812 790,800 860,812 930,800 1020,790" c="#fff" w={8} />

      <rect x="21" y="835" width="1272" height="32" fill="#d3dfec" />
      <L d="21,835 1293,835" c="#999" w={2} />
      {[184, 314, 445, 575, 706, 805, 936].map((x) => (
        <L key={x} d={`${x},835 ${x},867`} c="#aab" w={3} />
      ))}
      <T x={25} y={860} c="#333" bold>12/03</T>
      <T x={188} y={860}>11</T>
      <T x={318} y={860}>12</T>
      <T x={449} y={860}>13</T>
      <T x={579} y={860}>14</T>
      <T x={710} y={860}>15</T>
      <T x={809} y={860} c="#333" bold>12/04</T>
      <T x={940} y={860}>10</T>
    </svg>
  );
}

const dayCandles: Bar[] = [
  [27, 382, 405, RED, 378, 420],
  [50, 384, 389, RED],
  [73, 378, 382, RED],
  [98, 378, 382, BLUE, 370, 388],
  [121, 382, 388, RED, 372, 395],
  [145, 383, 388, RED],
  [168, 388, 394, BLUE, 380, 400],
  [192, 373, 400, RED, 360, 402],
  [215, 376, 381, RED],
  [238, 367, 390, RED],
  [262, 374, 379, RED, 368, 390],
  [287, 364, 377, RED],
  [310, 367, 373, RED, 358, 378],
  [333, 364, 371, RED],
  [357, 357, 364, RED, 350, 372],
  [380, 365, 370, RED],
  [405, 368, 385, BLUE],
  [427, 384, 390, BLUE, 372, 400],
  [451, 393, 399, BLUE, 380, 410],
  [475, 395, 400, BLUE, 390, 410],
  [499, 384, 405, RED],
  [522, 375, 381, RED, 370, 395],
  [545, 376, 382, BLUE],
  [569, 373, 385, RED, 365, 390],
  [593, 362, 376, BLUE, 350, 380],
  [617, 373, 465, BLUE],
  [640, 450, 477, RED],
  [663, 458, 483, BLUE, 450, 487],
  [687, 363, 483, RED],
  [711, 273, 318, RED, 260, 320],
  [733, 238, 275, RED],
  [758, 199, 248, RED, 165, 248],
  [781, 195, 199, RED, 135, 199],
  [805, 195, 205, RED, 185, 215],
  [828, 199, 405, BLUE, 175, 405],
  [851, 387, 408, RED, 387, 415],
  [876, 397, 421, BLUE],
  [899, 415, 420, RED],
  [922, 423, 430, BLUE],
  [945, 438, 455, BLUE],
  [970, 442, 453, BLUE, 435, 460],
  [993, 425, 463, RED],
];

const dayVolume: Bar[] = [
  [687, 745, 788, RED],
  [711, 603, 788, RED],
  [735, 735, 788, VB],
  [758, 690, 788, RED],
  [781, 730, 788, VB],
  [805, 762, 788, VB],
  [828, 712, 788, RED],
  [851, 745, 788, VB],
  [876, 775, 788, VB],
];

function DayChart() {
  const axis = ["60%", "50%", "40%", "30%", "20%", "10%"];
  const series = (n: number, x0: number, y0: number, y1: number) =>
    Array.from({ length: n }, (_, i) => [x0 + i * 23.5, y0 + ((y1 - y0) * i) / (n - 1)]);
  return (
    <svg viewBox="18 63 1389 762" className="block w-full" role="img" aria-label="일봉 차트">
      <rect x="18" y="63" width="1255" height="729" fill="#eaeaea" />
      {[121, 165, 210, 255, 301, 346, 436, 658].map((y) => (
        <L key={y} d={`18,${y} 1273,${y}`} c="#d6d6d6" w={2} />
      ))}
      {[441, 937].map((x) => (
        <L key={x} d={`${x},63 ${x},792`} c="#d2d2d2" w={3} />
      ))}
      <L d="27,369 600,369" c="#b8a0e8" w={6} />
      <L d="27,396 200,396 420,390 600,398 690,400" c="#ffa050" w={7} />
      <L d="27,403 300,396 500,398 690,412" c="#a0d820" w={12} />
      <L d="200,385 340,378 400,385 640,385" c="#50e030" w={7} />
      <L d="190,430 300,418 520,400 690,405" c="#58a080" w={5} />
      <L d="27,430 690,430" c="#90d8b0" w={5} />
      <L d="27,487 690,487" c="#40e840" w={7} />
      <L d="27,482 690,482" c="#0a8030" w={4} />
      <L d="27,472 190,462 470,450 640,440 740,438 900,425 1000,430" c="#1010c0" w={6} />
      <L d="40,438 690,438" c="#803090" w={8} dash="9 12" />
      <L d="27,465 190,465 208,405" c="#f010e0" w={7} />
      <L d="27,520 190,515 650,492 830,482" c="#000" w={5} />
      <L d="27,521 663,521 690,480 995,478" c="#000" w={5} dash="18 6" />
      <L d="27,280 75,280 95,320 640,322 665,347 995,347" c="#601060" w={6} />
      <L d="168,322 192,367 400,365 425,350" c="#b00c48" w={5} />
      <L d="168,425 192,375 690,370 720,250" c="#c02040" w={5} />
      <L d="192,373 690,373 712,290" c="#e000c0" w={5} />
      <L d="620,385 640,400 690,408 740,370 810,330 880,360 940,375 995,380" c="#ffb020" w={7} />
      <L d="690,420 710,380 760,365 995,365" c="#50e828" w={8} />
      <L d="700,430 760,385 850,380 995,388" c="#30a060" w={5} />
      <L d="700,395 920,395 940,425" c="#b8c830" w={8} />
      <L d="700,460 712,390 720,280 745,230 780,200" c="#c8a0e8" w={6} />
      <L d="735,525 735,430 715,135 705,460" c="#b8cc30" w={5} />
      <L d="735,525 895,525" c="#b8cc30" w={4} />
      <path d="M735 520L770 290 800 212 815 212 790 290 745 440z" fill="#dcffdc" />
      <L d="805,210 995,210" c="#fff" w={10} />
      <L d="770,196 975,196" c="#a0889c" w={6} />
      <path d="M967 195l25-50h8l-14 50z" fill="#c8ffd0" />
      <L d="780,240 790,248 970,248" c="#f090b0" w={7} />
      <L d="972,200 993,460" c="#c8a0e8" w={8} />
      <L d="690,430 735,300 800,315 995,315" c="#a09898" w={7} />
      <L d="710,300 735,272 840,272 995,272" c="#d010d0" w={6} />
      <L d="700,275 1210,275" c="#ffe810" w={10} />
      <L d="27,279 705,279" c="#f0b020" w={7} />
      <L d="700,345 850,348 920,360 935,425 995,428" c="#e06070" w={6} />
      <L d="805,215 830,350 870,365 930,430" c="#c02040" w={5} dash="14 7" />
      <L d="838,290 850,135 995,135" c="#901028" w={5} />
      <L d="18,436 1273,436" c="#c8e0b0" w={5} />
      {[199, 280, 320, 349, 391, 425, 482].map((y) => (
        <L key={y} d={`18,${y} 1273,${y}`} c="#a03050" w={4} />
      ))}
      <rect x="20" y="193" width="12" height="11" fill="#803050" />
      <Dots at={series(30, 27, 280, 280)} c="#e05818" r={7} />
      <Dots at={series(10, 781, 135, 135)} c="#e05818" r={7} />
      <Dots at={[[711, 223], [711, 251], [735, 243], [758, 167]]} c="#e05818" r={6} />
      <Dots at={series(37, 27, 574, 547)} c="#802818" r={5} />
      <Dots at={series(12, 50, 408, 378)} c="#50f020" r={6} />
      <Dots at={[[617, 405], [640, 420], [663, 445], [711, 400], [735, 365], [758, 330], [781, 272], [805, 238], [851, 293], [876, 335], [899, 380]]} c="#50f020" r={6} />
      <Dots at={[[640, 385], [663, 388], [851, 325], [876, 325], [899, 324], [922, 323], [993, 328], [781, 425], [805, 421], [828, 420], [945, 420], [970, 421]]} c="#2020c0" r={4} />
      <Bars data={dayCandles} w={17} />
      <path d="M27 425l10 10-10 10-10-10z M687 503l10 10-10 10-10-10z" fill="#700080" />
      <path d="M993 486l10 10-10 10-10-10z" fill="#c8a0f0" />
      <circle cx="27" cy="461" r="8" fill="#a0d820" />
      <circle cx="499" cy="438" r="9" fill="#a0d820" />
      <circle cx="687" cy="540" r="8" fill="#fff" />
      <Arrow x={687} y={562} c="#a0d820" />
      <Arrow x={851} y={456} c="#a0d820" />
      <path d="M876 363l-8-9h16z" fill="#000" />
      <T x={430} y={151} c="#c8325a">최고 4,355 (-37.77%, 11/21)</T>
      <path d="M772 145l-12-9v18z" fill="#c00018" />
      <T x={325} y={500} c="#3848c0">최저 2,290 (18.34%, 11/14)</T>
      <path d="M655 491l-12-9v18z" fill="#1020a0" />
      <T x={1266} y={191} end>3,990 (52.29%)</T>
      <T x={1266} y={271} end>3,533 (34.85%)</T>
      <T x={1266} y={311} end>3,294 (25.73%)</T>
      <T x={1266} y={339} end>3,133 (19.58%)</T>
      <T x={1266} y={383} end>2,881 (9.96%)</T>
      <T x={1266} y={416} end>2,697 (2.94%)</T>
      <T x={1266} y={478} c="#888" end>2,582 (-3.65%)</T>
      <T x={1266} y={452} c="#d838b8" end>피봇2차저항 2,693</T>
      <T x={1266} y={462} c="#80b870" end>당일고저/2 2,645</T>
      <Corner x={27} y={101} />

      <L d="18,598 1273,598" c="#b4b4b4" w={3} />
      <L d="18,720 1273,720" c="#888" w={3} />
      <L d="18,788 690,788" c="#2020c0" w={5} dash="18 30" />
      <L d="42,787 690,787" c="#c02020" w={5} dash="18 30" />
      <Bars data={dayVolume} w={17} />
      <L d="27,697 140,710 165,725 190,712 240,715 300,705 380,710 460,738 510,725 580,712 610,780 680,780 700,700 770,610 800,605 830,750 860,745 890,755" c="#30a868" w={4} />
      <L d="27,632 60,647 190,650 260,660 400,610 430,615 530,700 580,705 620,700 665,730 700,740 760,700 820,655 890,668" c="#5878e0" w={4} />
      <L d="27,648 140,648 170,662 240,660 350,605 380,605 430,655 500,716 560,705 595,680 640,755 665,785 720,750 800,650 890,700" c="#c818c8" w={4} />
      <L d="50,778 690,778 750,720 820,655 890,638" c="#40f030" w={6} />
      <L d="680,780 750,650 790,605 820,640 850,628 890,635" c="#ff9830" w={6} />
      <L d="50,785 130,778 180,782 270,755 300,760 330,770 450,760 590,730 615,775 690,775 710,640 760,607 810,605 830,700 890,695" c="#fff" w={7} />

      <rect x="1273" y="63" width="134" height="729" fill="#d6e2ee" />
      <L d="1273,63 1273,825" c="#b0b8c0" w={3} />
      <T x={1275} y={86} c="#c8325a">LC:18.34</T>
      <T x={1275} y={110} c="#3858b0">HC:-37.77</T>
      <T x={1292} y={131}>70%</T>
      {axis.map((p, i) => (
        <T key={p} x={1292} y={172 + i * 45}>{p}</T>
      ))}
      <rect x="1283" y="409" width="117" height="24" fill="#d80010" />
      <T x={1290} y={430} c="#fff">2,710</T>
      <T x={1292} y={454} c="#c8325a">3.44%</T>
      <T x={1292} y={490}>-10%</T>
      <T x={1292} y={534}>-20%</T>
      <rect x="1384" y="605" width="14" height="12" fill="#445" />
      <rect x="1283" y="698" width="117" height="25" fill="#d80010" />
      <T x={1370} y={743} c="#c8325a">%</T>
      <rect x="18" y="792" width="1389" height="33" fill="#d3dfec" />
      <L d="18,792 1407,792" c="#999" w={2} />
      <L d="441,792 441,825" c="#aab" w={3} />
      <T x={20} y={817}>2024/10</T>
      <T x={445} y={817}>11</T>
    </svg>
  );
}

/* ---------- application header ---------- */

const toolbar: [string, string][] = [
  ["#1c1c8c", "M2 3h6v4H4M4 5L2 3l2-1M4 7v4h7M9 9l2 2-2 1"],
  ["#555", "M1 2h5v4H1zM1 8h5v4H1zM8 3h4v3H8zM8 9h4v3H8zM6 4h2M6 10h2"],
  ["#c8901c", "M7 2a5 5 0 1 0 .1 0M7 5a2 2 0 1 0 .1 0M7 0v2M7 12v2M0 7h2M12 7h2M2 2l2 2M10 10l2 2M2 12l2-2M10 4l2-2"],
  ["#555", "M1 1h11v11H1zM2 5l3 2 3-3 4 2M7 8v4M6 9h3"],
  ["#b43c50", "M2 1v11h11M3 9l3-5 3 3 4-5M10 9h3v3"],
  ["#1c1c5c", "M4 1l7 7H7l2 4-2 1-2-4-1 1z"],
  ["#555", "M1 4h12M1 2v4M13 2v4M3 10l3-3 2 4 4-3"],
  ["#555", "M1 11L13 3M3 8v3M11 3v3"],
  ["#555", "M1 6l12-4M2 9h2v3M6 9v3h2M10 9h3v3"],
  ["#555", "M1 9l2-4 2 5 3-8 2 9 3-5"],
  ["#c03050", "M3 5h2v5H3zM6 3h2v7H6zM9 5h2v4H9zM4 3v9M7 1v11M10 3v8"],
  ["#1c1c8c", "M3 8V3h8v5M1 7l2 3 2-3M9 7l2 3 2-3"],
  ["#555", "M1 2h6M4 2v6M5 11l3-5 2 6 3-6"],
  ["#555", "M6 2h6v6H6zM2 11h4V5M9 3v4"],
  ["#666", "M4 8l5-6 4 3-5 6H5zM1 12h9"],
  ["#666", "M5 7l4-5 4 3-4 5H6zM1 12l2-4 1 4M8 13h5"],
  ["#555", "M1 2h12M1 5h4M1 8h4M1 11h4M6 5h6M9 5v7"],
  ["#555", "M1 3h9M1 7h9M1 11h9M12 1v12"],
  ["#555", "M1 2h12M1 5h12M1 8h12M1 11h12"],
  ["#c03050", "M2 11l4-9 3 6 3 3M3 9h2M9 4h3"],
  ["#c03050", "M2 4h3v6H2zM8 3h4v8H8zM3 1v11M10 1v12"],
];

function Header() {
  return (
    <header className="relative shrink-0">
      <div className="flex h-[16px] items-center justify-end gap-[7px] bg-[#3c5593] pr-[13px] text-[#dfe6f6]">
        <div className="flex items-center gap-[3px] whitespace-nowrap">
          <span>금융센터</span>
          <span>1544-9000/1544-9911</span>
          <span>|</span>
          <span>주문 1544-4989</span>
          <span>|</span>
          <span>ARS 1544-9900</span>
          <svg viewBox="0 0 6 4" className="h-[4px] w-[6px]"><path d="M0 0h6L3 4z" fill="#b8c6ea" /></svg>
        </div>
        <a href="#chat" className="ml-[4px] text-[#b8c6ea]">채팅</a>
        <Share2 size={9} />
        <House size={10} fill="#b8c6ea" />
        <nav className="flex gap-[6px] pr-[5px] pl-[4px] font-bold">
          {["1", "2", "3", "4", "5", "6", "7", "8"].map((n) => (
            <a key={n} href={`#screen-${n}`} className={n === "1" ? "underline" : ""}>{n}</a>
          ))}
        </nav>
        <Monitor size={9} />
        <span className="h-[6px] w-[7px] border-b border-[#b8c6ea]" />
        <span className="h-[7px] w-[8px] border border-t-2 border-[#b8c6ea]" />
        <X size={9} />
      </div>
      <div className="h-[16px] bg-gradient-to-b from-[#d4d4d6] to-[#e8e8ea]" />
      <div className="flex h-[26px] justify-end bg-gradient-to-b from-[#a9b6d4] to-[#bcc8e2]">
        <div className="mt-[2px] mr-[4px] flex h-[21px] w-[140px] items-center justify-center gap-[4px] rounded-[4px] border border-[#888] bg-gradient-to-b from-[#333] to-black text-[12px] font-bold text-white">
          am <span className="text-[#ffee40]">10:57:52</span>
          <span className="text-[8px] text-[#aaa]">12/04 수</span>
        </div>
        <div className="flex w-[441px] items-center justify-between bg-[#f6f6f6] pr-[6px] pb-[6px] pl-[4px]">
          {toolbar.map(([color, d], i) => (
            <button key={i} type="button" aria-label={`차트 도구 ${i + 1}`} className="flex size-[16px] items-center justify-center border border-[#a0a0a0] bg-[#efefef]">
              <svg viewBox="0 0 14 14" className="size-[13px]" fill="none" stroke={color} strokeWidth={i === 0 || i === 11 ? 2 : 1}>
                <path d={d} fill={i === 5 ? color : "none"} />
              </svg>
            </button>
          ))}
        </div>
      </div>
      <h1 className="absolute top-0 left-0 h-[39px] border-b border-white pr-[16px] font-['Noto_Sans_CJK_KR',sans-serif] text-[42px] leading-[34px] font-black whitespace-nowrap text-white">
        나르샤 주식부자TV
      </h1>
    </header>
  );
}

/* ---------- signal popup ---------- */

const signals: [string, string][] = [
  ["10:57:52", "경남스틸"],
  ["10:57:51", "PN풍년"],
  ["10:57:51", "PN풍년"],
  ["10:57:50", "인터지스"],
  ["10:57:50", "덕성"],
  ["10:57:50", "인터지스"],
];

function SignalPopup() {
  return (
    <aside className="absolute right-[22px] bottom-0 w-[161px] border border-b-0 border-[#3c5593] bg-white">
      <div className="flex h-[14px] items-center justify-between bg-[#3c5593] px-[3px] text-[#e8eefc]">
        <h2 className="text-[9px] font-bold">신호관리자</h2>
        <button type="button" aria-label="닫기" className="pr-[2px]"><X size={8} /></button>
      </div>
      <div className="mx-px mt-[2px] flex border border-[#999]">
        <table className="flex-1 table-fixed border-collapse text-[#555]">
          <colgroup>
            <col className="w-[40px]" />
            <col className="w-[20px]" />
            <col />
          </colgroup>
          <thead>
            <tr className="h-[14px] bg-[#f5f5f5]">
              <th className="border-r border-[#ccc] p-0 font-normal whitespace-pre">시    간</th>
              <th className="border-r border-[#ccc] p-0 font-normal">구분</th>
              <th className="p-0 font-normal whitespace-pre">종    목</th>
            </tr>
          </thead>
          <tbody>
            {signals.map(([time, name], i) => (
              <tr key={i} className="h-[12px]">
                <td className="border-r border-[#ccc] p-0 text-center">{time}</td>
                <td className="border-r border-[#ccc] p-0">
                  <span className="mx-auto flex h-[11px] w-[10px] items-center justify-center bg-[#d04030] text-white">검</span>
                </td>
                <td className="p-0 pl-[4px]">{name}</td>
              </tr>
            ))}
          </tbody>
        </table>
        <div className="flex w-[10px] flex-col items-center justify-between bg-[#f0f0f0] py-[4px]">
          <Tri className="rotate-180" />
          <div className="mt-[4px] mb-auto h-[11px] w-full bg-[#c4c4c4]" />
          <Tri />
        </div>
      </div>
      <div className="mt-px h-[16px] border-t border-[#777]" />
    </aside>
  );
}

export default function App() {
  const periods = ["일", "주", "월", "년", "분", "초", "틱"];
  const minutes = ["1", "3", "5", "10", "15", "30", "45", "60"];
  return (
    <div className="relative flex h-screen w-full flex-col overflow-hidden bg-[#3c4f86] font-['Liberation_Sans','Noto_Sans_CJK_KR',sans-serif] text-[8px] leading-[12px] text-[#444]">
      <Header />
      <main className="mr-[4px] mb-[4px] flex min-h-0 flex-1 gap-[3px] bg-[#989898] pt-[2px]">
        <div className="flex w-[185px] shrink-0 flex-col gap-[3px] pb-[2px]">
          <WatchPanel />
          <ScanPanel flush extra title="달려라급등아~ 120일선돌파" count={7} rows={surge} cols={[48, 37, 40, 44, 16]} className="h-[228px] shrink-0" />
          <ScanPanel flush title="급등이 - 빨간 굵은선 돌파 매" count={24} rows={redLine} cols={[50, 45, 40, 50]} className="min-h-0 flex-1" />
        </div>
        <div className="flex w-[183px] shrink-0 flex-col gap-[3px] pb-[2px]">
          <ScanPanel title="5봉신고가단타" count={4} rows={fiveHigh} cols={[52, 37, 40, 51]} className="h-[176px] shrink-0" />
          <ScanPanel title="저점물타기 일봉엠벌" count={16} rows={lowPoint} cols={[68, 35, 40, 37]} className="h-[266px] shrink-0" />
          <ScanPanel title="단타 스윙 120분봉 그자리" count={7} rows={swing} cols={[68, 35, 40, 37]} className="min-h-0 flex-1" />
        </div>

        <div className="flex min-w-0 flex-1 flex-col">
          <div className="flex h-[370px] shrink-0">
            <div className="flex w-[145px] shrink-0 flex-col gap-[3px] pt-px">
              <TickWindow />
              <div className="flex flex-1 items-center gap-[2px] overflow-hidden bg-[#cfcfcf] pl-[3px]">
                <CodeBar />
              </div>
            </div>
            <section className="flex min-w-0 flex-1 flex-col border-2 border-t-[#34508c] border-r-[#989898] border-b-[#989898] border-l-[#989898] bg-[#cfcfcf] pr-[2px] pl-[2px]">
              <div className="flex h-[18px] shrink-0 items-center gap-[2px]">
                <CodeBar />
                <span className="w-[41px] bg-white pl-px">SG글로벌</span>
                <div className="flex gap-px">
                  {periods.map((p) => (
                    <button key={p} type="button" className={`h-[13px] w-[12px] border ${p === "분" ? "border-[#2d68b0] bg-[#3d6cb4] text-white" : "border-[#b0b0b0] bg-[#e4e4e4] text-[#555]"}`}>
                      {p}
                    </button>
                  ))}
                </div>
                <div className="flex">
                  {minutes.map((m) => (
                    <button key={m} type="button" className="h-[13px] w-[12px] border border-[#b0b0b0] bg-[#e0e0e0] text-[#666]">{m}</button>
                  ))}
                </div>
                <Combo label="분" value="2" className="w-[25px]" />
                <input aria-label="봉 수" defaultValue="63" className="h-[13px] w-[20px] border border-[#a5a5a5] bg-white pr-px text-right" />
                <span className="w-[22px]">/903</span>
                <Btn label="봉"><BarsPlus /></Btn>
                <Btn label="선"><WavePlus /></Btn>
                <Btn label="저장"><Save size={9} /></Btn>
                <Btn label="설정"><Settings size={9} strokeWidth={3} /></Btn>
                <Check label="0" />
                <input aria-label="날짜" defaultValue="12/04" className="h-[13px] w-[25px] border border-[#a5a5a5] bg-white px-px" />
                <Btn label="달력"><CalendarDays size={8} /></Btn>
              </div>
              <div className="mb-[2px]">
                <QuoteBar>
                  <button type="button" className="ml-[4px] w-[25px] shrink-0 border border-[#d8a0a8] bg-[#f8c8d0] leading-[10px] text-[#b02848]">매수</button>
                  <button type="button" className="ml-[2px] w-[25px] shrink-0 border border-[#98b4d8] bg-[#bcd4f0] leading-[10px] text-[#284888]">매도</button>
                  <button type="button" className="ml-[2px] w-[12px] shrink-0 border border-[#aaa] leading-[10px]">평</button>
                </QuoteBar>
              </div>
              <MainChart />
              <ScrollRow controls={9} />
            </section>
          </div>

          <div className="flex min-h-0 flex-1 gap-[4px] pb-[2px]">
            <section className="flex w-[427px] shrink-0 flex-col bg-[#cfcfcf] pl-[3px]">
              <QuoteBar />
              <div className="mt-[3px]"><TenMinuteChart /></div>
              <ScrollRow controls={8} />
            </section>
            <section className="flex min-w-0 flex-1 flex-col bg-[#cfcfcf] pr-[7px] pl-px">
              <QuoteBar />
              <div className="mt-[3px]"><DayChart /></div>
              <ScrollRow controls={9} />
            </section>
          </div>
        </div>
      </main>
      <SignalPopup />
    </div>
  );
}
